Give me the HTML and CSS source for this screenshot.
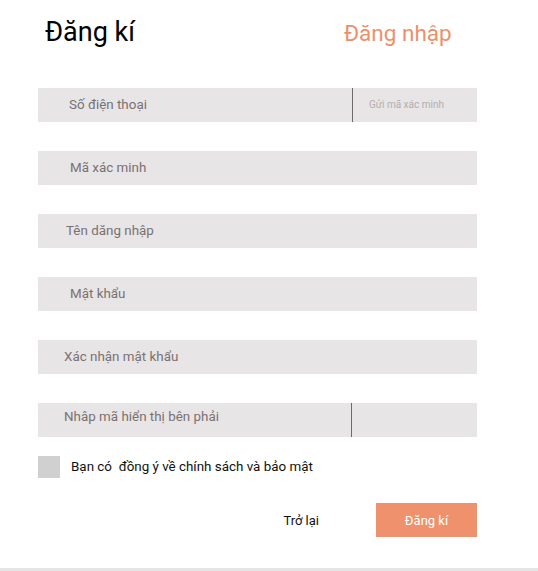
FILE: index.html
```html
<!DOCTYPE html>
<html lang="vi">
<head>
<meta charset="utf-8">
<link rel="stylesheet" href="styles.css">
</head>
<body>
<div class="page">
  <header class="header">
    <h1 class="title">Đăng kí</h1>
    <a class="login-link">Đăng nhập</a>
  </header>
  <div class="form">
    <div class="field split">
      <span class="label pad-31">Số điện thoại</span>
      <span class="side"><span class="send">Gửi mã xác minh</span></span>
    </div>
    <div class="field"><span class="label pad-32">Mã xác minh</span></div>
    <div class="field"><span class="label pad-28">Tên dăng nhập</span></div>
    <div class="field"><span class="label pad-32">Mật khẩu</span></div>
    <div class="field"><span class="label pad-26">Xác nhận mật khẩu</span></div>
    <div class="field split captcha">
      <span class="label pad-26 up">Nhâp mã hiển thị bên phải</span>
      <span class="side"></span>
    </div>
  </div>
  <label class="agree">
    <span class="box"></span>
    <span class="agree-text">Bạn có&nbsp; đồng ý về chính sách và bảo mật</span>
  </label>
  <div class="actions">
    <span class="back">Trở lại</span>
    <span class="submit">Đăng kí</span>
  </div>
</div>
<div class="bottom-bar"></div>
</body>
</html>
```
FILE: styles.css
```css
* { box-sizing: border-box; }
html, body { margin: 0; padding: 0; background: #fff; }
body {
  font-family: Roboto, "Noto Sans", sans-serif;
  width: 538px;
  height: 571px;
  overflow: hidden;
  position: relative;
}
.page { height: 568px; }
.header {
  display: flex;
  align-items: baseline;
  padding: 16px 0 0 45px;
  height: 49px;
}
.title {
  margin: 0;
  font-size: 27px;
  font-weight: 400;
  line-height: 32px;
  color: #000;
  width: 299px;
}
.login-link {
  font-size: 22.5px;
  line-height: 32px;
  color: #ee8f6b;
}
.form {
  margin: 39px 0 0 38px;
  width: 439px;
  display: flex;
  flex-direction: column;
  gap: 29px;
}
.field {
  height: 34px;
  background: #e7e5e6;
  display: flex;
  align-items: center;
}
.label {
  font-size: 13.4px;
  color: #7a7172;
  flex: 1;
  margin-top: -2px;
}
.pad-31 { padding-left: 31px; }
.pad-32 { padding-left: 32px; }
.pad-28 { padding-left: 28px; }
.pad-26 { padding-left: 26px; }
.label.up { margin-top: -7px; }
.split .side {
  width: 125px;
  height: 34px;
  border-left: 1px solid #6e6a6a;
  display: flex;
  align-items: center;
  padding-left: 16px;
}
.captcha .side { width: 126px; }
.send {
  font-size: 10px;
  color: #b3adad;
  margin-top: -2px;
}
.agree {
  display: flex;
  align-items: center;
  margin: 19px 0 0 38px;
  height: 22px;
}
.box {
  width: 22px;
  height: 22px;
  background: #d0d0d0;
}
.agree-text {
  margin-left: 11px;
  font-size: 13.4px;
  color: #111;
  margin-top: -2px;
}
.actions {
  display: flex;
  justify-content: flex-end;
  align-items: center;
  margin: 25px 61px 0 0;
  gap: 57px;
}
.back {
  font-size: 13px;
  color: #111;
}
.submit {
  width: 101px;
  height: 34px;
  background: #ee916c;
  color: #fff;
  font-size: 13px;
  display: flex;
  align-items: center;
  justify-content: center;
}
.bottom-bar {
  height: 3px;
  background: #e5e5e5;
}
```
